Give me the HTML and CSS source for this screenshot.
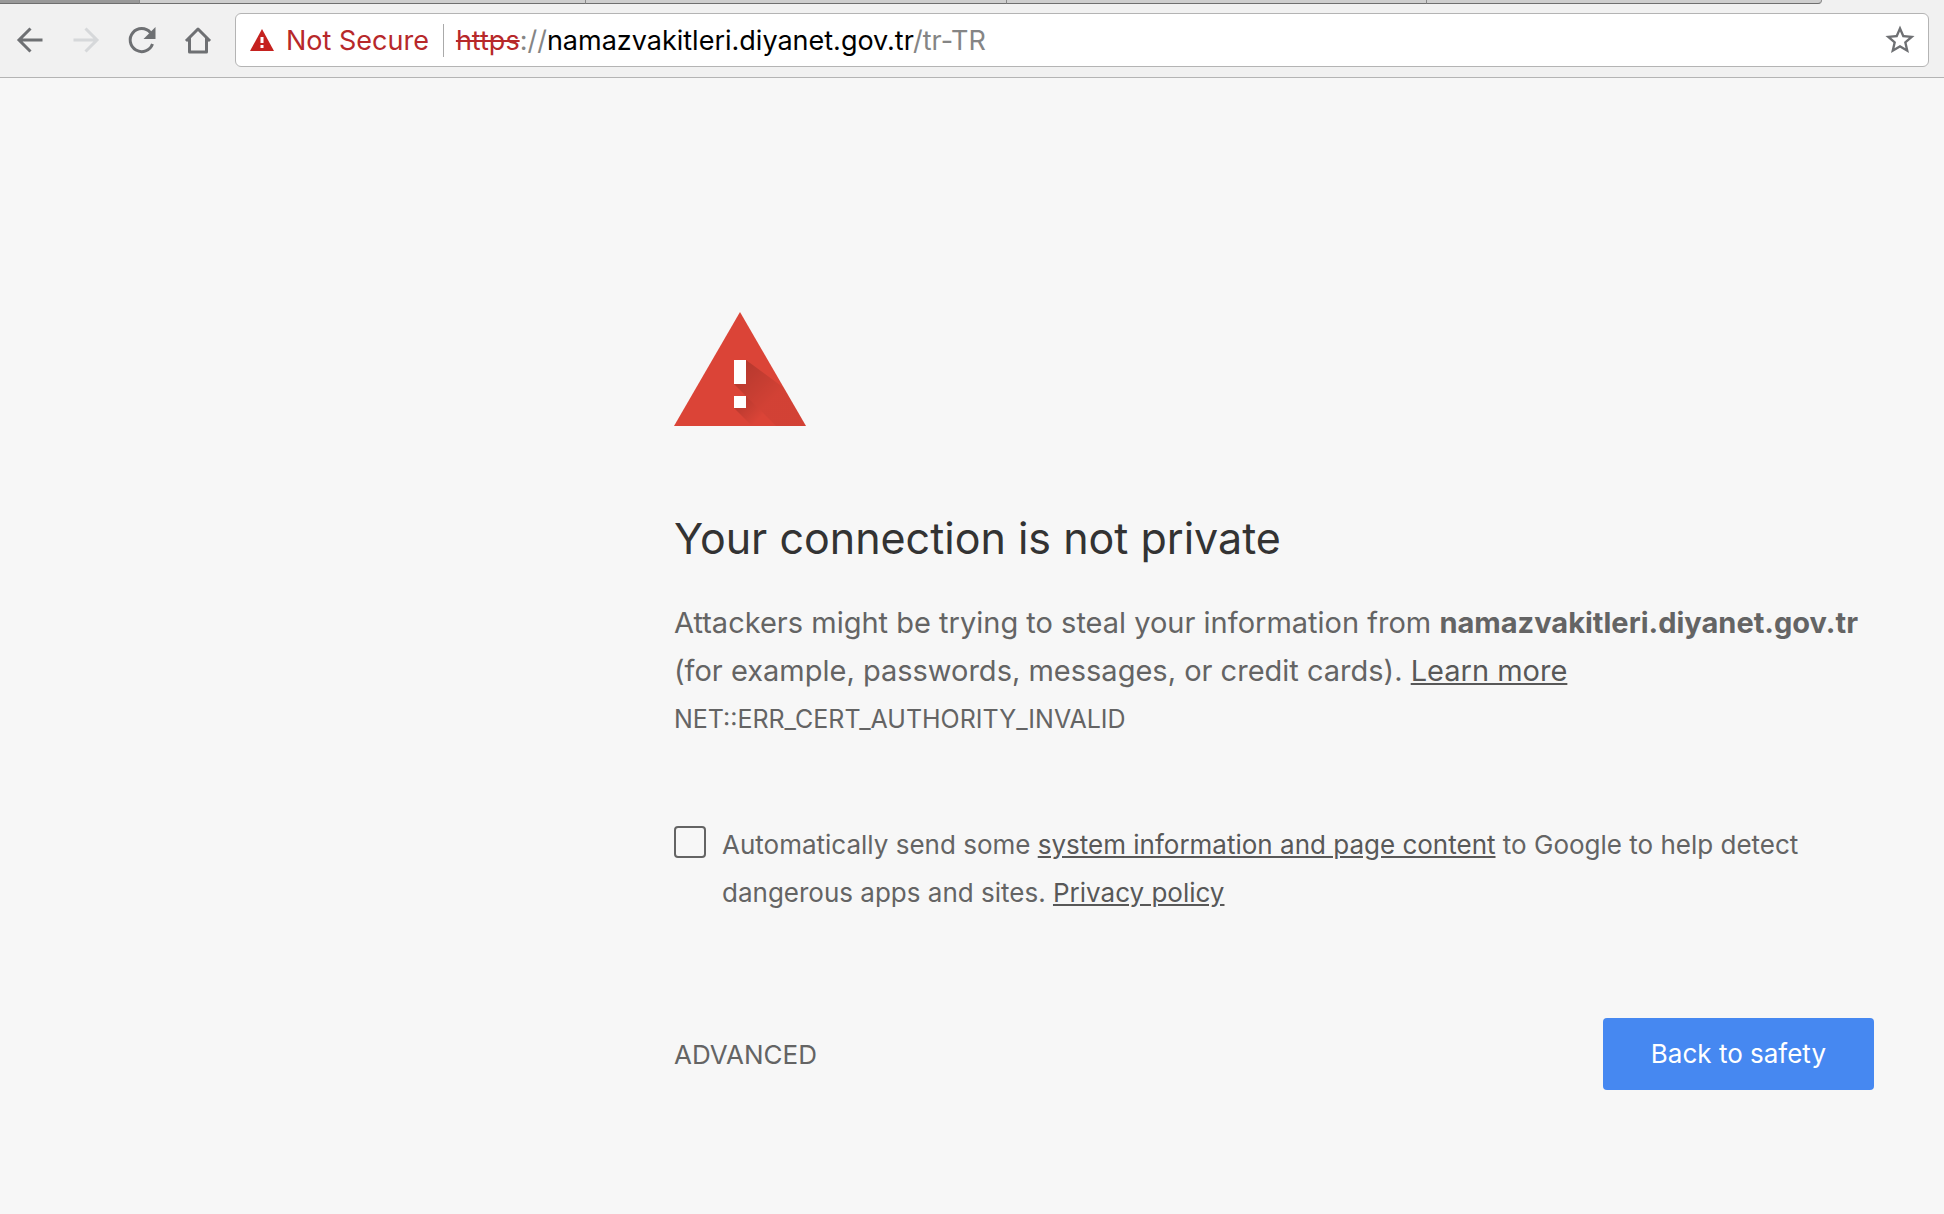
FILE: index.html
```html
<!DOCTYPE html>
<html lang="en">
<head>
<meta charset="utf-8">
<title>Privacy error</title>
<link rel="stylesheet" href="styles.css">
</head>
<body>
<header class="browser">
  <div class="tabs">
    <span class="tab tab-dark"></span>
    <span class="tab tab-wide"></span>
    <span class="tab"></span>
    <span class="tab"></span>
    <span class="tab tab-last"></span>
  </div>
  <nav class="toolbar" aria-label="Browser">
    <div class="nav-buttons">
      <button class="icon-button" type="button" aria-label="Back">
        <svg class="icon" viewBox="0 0 32 32"><path d="M28.500 16H5M16.500 4.500L5 16l11.500 11.500"/></svg>
      </button>
      <button class="icon-button" type="button" aria-label="Forward" disabled>
        <svg class="icon" viewBox="0 0 32 32"><path d="M3.500 16H27M15.500 4.500L27 16 15.500 27.500"/></svg>
      </button>
      <button class="icon-button" type="button" aria-label="Reload">
        <svg class="icon" viewBox="0 0 32 32"><path d="M26.500 20A11.500 11.500 0 1 1 24.500 8.700"/><path class="solid" d="M29.500 3v12h-12z"/></svg>
      </button>
      <button class="icon-button" type="button" aria-label="Home">
        <svg class="icon" viewBox="0 0 32 32"><path d="M4 17L16 5l12 12M7.500 14v14h17V14" stroke-linejoin="round"/></svg>
      </button>
    </div>
    <div class="omnibox">
      <svg class="alert" viewBox="0 0 24 22"><path fill="#c5221f" d="M12 0l12 22H0z"/><path fill="#fff" d="M10.500 8h3v6h-3zM10.500 16h3v3h-3z"/></svg>
      <span class="status">Not Secure</span>
      <div class="address" role="textbox" aria-label="Address" contenteditable="true" spellcheck="false"><s class="scheme">https</s><span class="muted">://</span>namazvakitleri.diyanet.gov.tr<span class="muted">/tr-TR</span></div>
      <button class="icon-button" type="button" aria-label="Bookmark this page">
        <svg class="icon" viewBox="1 1 22 22"><path class="solid" d="M22 9.240l-7.190-.62L12 2 9.190 8.630 2 9.240l5.460 4.730L5.820 21 12 17.270 18.180 21l-1.630-7.030L22 9.240zM12 15.400l-3.760 2.270 1-4.280-3.320-2.880 4.380-.38L12 6.100l1.710 4.040 4.380.38-3.320 2.880 1 4.280L12 15.400z"/></svg>
      </button>
    </div>
  </nav>
</header>
<main class="warning">
  <svg class="warning-icon" viewBox="0 0 132 114" aria-hidden="true">
    <defs>
      <linearGradient id="shade" gradientUnits="userSpaceOnUse" x1="66" y1="60" x2="96" y2="90">
        <stop offset="0" stop-color="#000" stop-opacity=".16"/>
        <stop offset="1" stop-color="#000" stop-opacity=".04"/>
      </linearGradient>
      <linearGradient id="shade-dot" gradientUnits="userSpaceOnUse" x1="66" y1="90" x2="84" y2="108">
        <stop offset="0" stop-color="#000" stop-opacity=".16"/>
        <stop offset="1" stop-color="#000" stop-opacity="0"/>
      </linearGradient>
    </defs>
    <path fill="#db4437" d="M66 0l66 114H0z"/>
    <path fill="url(#shade)" d="M72 48l38 28 22 38h-30L60 72z"/>
    <path fill="url(#shade-dot)" d="M72 84l30 30H78L60 96z"/>
    <path fill="#fff" d="M60 48h12v24H60zM60 84h12v12H60z"/>
  </svg>
  <h1 class="title">Your connection is not private</h1>
  <p class="lead">Attackers might be trying to steal your information from <strong>namazvakitleri.diyanet.gov.tr</strong> (for example, passwords, messages, or credit cards). <a class="link" href="#learn">Learn more</a></p>
  <p class="code">NET::ERR_CERT_AUTHORITY_INVALID</p>
  <div class="report">
    <input class="checkbox" type="checkbox" id="report">
    <p class="report-text"><label for="report">Automatically send some <a class="link" href="#info">system information and page content</a> to Google to help detect dangerous apps and sites.</label> <a class="link" href="#privacy">Privacy policy</a></p>
  </div>
  <div class="actions">
    <button class="advanced" type="button">ADVANCED</button>
    <button class="primary" type="button">Back to safety</button>
  </div>
</main>
</body>
</html>
```
FILE: styles.css
```css
* { box-sizing: border-box; }

body {
  margin: 0;
  min-height: 100vh;
  background: #f7f7f7;
  color: #646464;
  font-family: Inter, "Liberation Sans", sans-serif;
  font-size: 26px;
}

button {
  border: 0;
  padding: 0;
  background: none;
  color: inherit;
  font: inherit;
}

.browser {
  background: #f1f1f1;
  border-bottom: 1px solid #b4b4b4;
}

.tabs {
  display: flex;
  height: 4px;
  padding-right: 122px;
}

.tab {
  flex: 420;
  background: #cecece;
  border-right: 1px solid #8a8a8a;
  border-bottom: 1px solid #6f6f6f;
}

.tab-dark {
  flex: 139;
  background: #999;
}

.tab-wide { flex: 446; }

.tab-last {
  flex: 394;
  border-bottom-right-radius: 4px;
}

.toolbar {
  display: flex;
  align-items: center;
  gap: 21px;
  padding: 9px 15px 10px 14px;
}

.nav-buttons {
  display: flex;
  gap: 24px;
}

.icon-button {
  display: flex;
  color: #6e7073;
}

.icon-button:disabled { color: #d6d8da; }

.icon {
  width: 32px;
  height: 32px;
  fill: none;
  stroke: currentColor;
  stroke-width: 3;
}

.solid {
  fill: currentColor;
  stroke: none;
}

.omnibox {
  display: flex;
  flex: 1;
  align-items: center;
  height: 54px;
  padding: 0 12px 0 14px;
  background: #fff;
  border: 1px solid #b4b4b4;
  border-radius: 6px;
  font-size: 27px;
}

.alert {
  width: 24px;
  height: 22px;
  margin-right: 12px;
}

.status {
  padding-right: 14px;
  border-right: 1px solid #aaa;
  color: #b7282a;
}

.address {
  flex: 1;
  padding-left: 12px;
  color: #000;
  white-space: nowrap;
  outline: 0;
}

.scheme { color: #b7282a; }

.muted { color: #858585; }

.warning {
  max-width: 1270px;
  margin-left: auto;
  padding: 234px 70px 60px 0;
}

.warning-icon {
  display: block;
  width: 132px;
  height: 114px;
}

.title {
  margin: 84px 0 32px;
  color: #333;
  font-size: 43px;
  font-weight: 400;
  line-height: 57px;
}

.lead,
.code {
  margin: 0;
  line-height: 48px;
}

.lead { font-size: 29px; }

.code { font-size: 25px; }

.link { color: #585858; }

.report {
  display: flex;
  gap: 16px;
  margin-top: 78px;
  line-height: 48px;
}

.report-text { margin: 0; }

.checkbox {
  flex: none;
  width: 32px;
  height: 32px;
  margin: 5px 0;
  border: 2px solid #646464;
  border-radius: 4px;
  appearance: none;
}

.checkbox:checked { background: #4285f4; }

.actions {
  display: flex;
  justify-content: space-between;
  align-items: center;
  margin-top: 101px;
}

.primary {
  padding: 20px 48px;
  background: #4688f1;
  border-radius: 4px;
  color: #fff;
  line-height: 32px;
}
```
